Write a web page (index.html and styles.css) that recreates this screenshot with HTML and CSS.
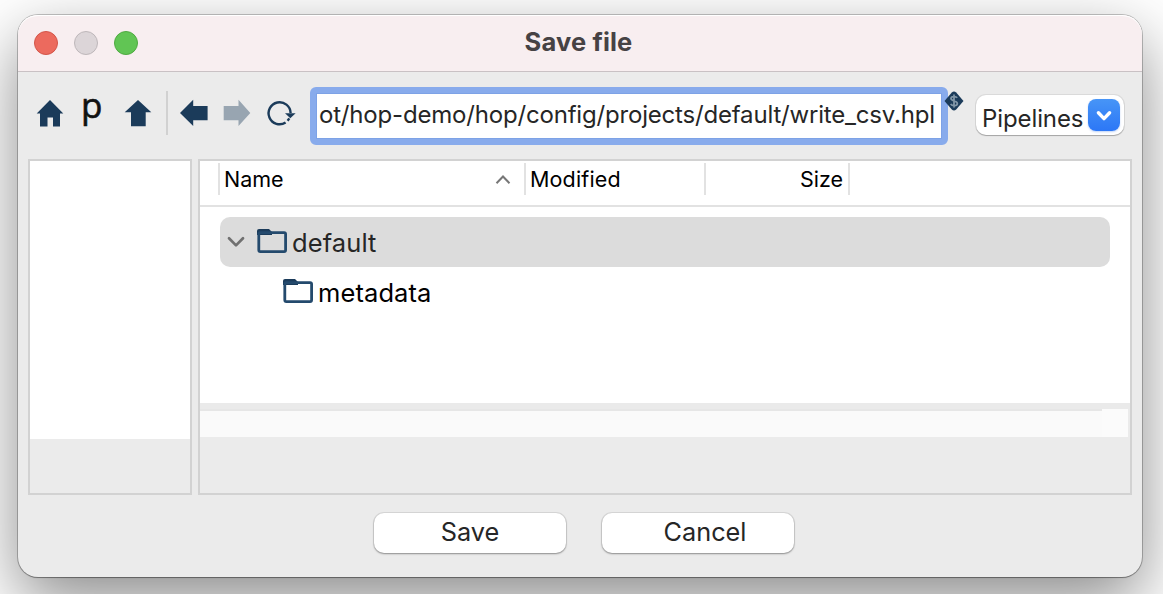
FILE: index.html
```html
<!DOCTYPE html>
<html lang="en">
<head>
<meta charset="utf-8">
<title>Save file</title>
<link rel="stylesheet" href="styles.css">
</head>
<body>
<main class="window">
  <header class="titlebar">
    <div class="lights"><span class="light close"></span><span class="light minimize"></span><span class="light zoom"></span></div>
    <h1 class="title"><span>Save file</span></h1>
  </header>
  <section class="toolbar">
    <svg class="icon home" viewBox="0 0 28 28"><path d="M14 1 27.3 14.6H24V27.5H17V18.5H11.5V27.5H4V14.6H.7Z"/></svg>
    <span class="project">p</span>
    <svg class="icon up" viewBox="0 0 28 28"><path d="M14 1 27.3 13.2H21.7V27.3H7V13.2H.7Z"/></svg>
    <span class="separator"></span>
    <svg class="icon back" viewBox="0 0 28 28"><path d="M0 14 13.2.8V7H27.6V21.2H13.2V27Z"/></svg>
    <svg class="icon forward" viewBox="0 0 28 28"><path d="M27.3 14 15.5.8V7H.7V21.2H15.5V27Z"/></svg>
    <svg class="icon refresh" viewBox="0 0 28 28"><path class="arc" d="M18.6 23.5A11 11 0 1 1 23.6 14M22.3 19.4 20.6 21.7"/><path d="M18 14.2H28.6L23.3 19.2Z"/></svg>
    <div class="path-field">
      <div class="path-input"><span class="path-text">ot/hop-demo/hop/config/projects/default/write_csv.hpl</span></div>
      <svg class="variable" viewBox="0 0 20 20"><path class="diamond" d="M.5 10 7.8 1.5Q10-.3 12.2 1.5L19.5 10 12.2 18.5Q10 20.3 7.8 18.5Z"/><path class="dollar" d="M13.2 6.8C12 5 7 5 7 7.6S13.3 9.5 13.3 12.4 8.2 15.2 6.7 13M10 3.5V16.5"/></svg>
    </div>
    <div class="select">
      <span class="select-text">Pipelines</span>
      <span class="select-button"><svg viewBox="0 0 32 32"><path d="M10.4 13.8 16 19.6 21.6 13.8"/></svg></span>
    </div>
  </section>
  <section class="panes">
    <aside class="pane bookmarks"><div class="list"></div></aside>
    <div class="pane browser">
      <div class="columns">
        <div class="column name"><span class="label">Name</span><svg class="sort" viewBox="0 0 16 10"><path d="M1.5 9.2 8 2.5 14.5 9.2"/></svg></div>
        <div class="column modified"><span class="label">Modified</span></div>
        <div class="column size"><span class="label">Size</span></div>
      </div>
      <div class="tree">
        <div class="row selected">
          <svg class="chevron" viewBox="0 0 18 12"><path d="M2 2.3 9 9.4 16 2.3"/></svg>
          <svg class="folder" viewBox="0 0 30 26"><path class="tab" d="M0 7V3Q0 1 2 1H12L15 4V7Z"/><rect x="1.8" y="4.6" width="26.8" height="19" rx="1.5"/></svg>
          <span class="label default">default</span>
        </div>
        <div class="row child">
          <svg class="folder" viewBox="0 0 30 26"><path class="tab" d="M0 7V3Q0 1 2 1H12L15 4V7Z"/><rect x="1.8" y="4.6" width="26.8" height="19" rx="1.5"/></svg>
          <span class="label metadata">metadata</span>
        </div>
      </div>
      <div class="splitter"></div>
      <div class="scroll-strip"><span class="strip-line"></span><span class="corner"></span></div>
    </div>
  </section>
  <footer class="actions">
    <button class="button save"><span>Save</span></button>
    <button class="button cancel"><span>Cancel</span></button>
  </footer>
</main>
</body>
</html>
```
FILE: styles.css
```css
* { box-sizing: border-box; }
body {
  margin: 0;
  height: 594px;
  padding: 15px 21px 17px 18px;
  overflow: hidden;
  background: #fff;
  font-family: Inter, "Liberation Sans", sans-serif;
  color: #262626;
}
svg { display: block; flex: none; overflow: visible; }
span { white-space: nowrap; }
.window {
  width: 1124px;
  height: 562px;
  border-radius: 20px;
  background: #ebebeb;
  box-shadow: 0 0 0 1px rgba(0,0,0,.22), 0 1px 1px rgba(0,0,0,.25), 0 24px 66px rgba(0,0,0,.46);
}
.titlebar {
  display: grid;
  grid-template-columns: 1fr auto 1fr;
  align-items: center;
  height: 57px;
  border-bottom: 1px solid #c9c1c4;
  border-radius: 20px 20px 0 0;
  background: #f8eef0;
  box-shadow: inset 0 1px #fff;
}
.lights { display: flex; gap: 16px; padding-left: 16px; }
.light { width: 24px; height: 24px; border-radius: 50%; border: 1px solid; }
.close { background: #ec6a5e; border-color: #d35549; }
.minimize { background: #dcd5d8; border-color: #beb7ba; }
.zoom { background: #61c554; border-color: #4faa41; }
.title { margin: 0 3px 2px 0; font-size: 25.5px; font-weight: 700; line-height: 32px; color: #464244; letter-spacing: .15px; }
.toolbar { display: flex; align-items: flex-start; height: 87px; padding-left: 18px; }
.icon { width: 28px; height: 28px; margin-top: 27px; fill: #1b3b5a; }
.project { width: 21px; margin: 11px 0 0 17px; color: #111; font: 35px/44px "Open Sans", sans-serif; -webkit-text-stroke: .6px #111; }
.up { margin-left: 22px; }
.separator { width: 2px; height: 44px; margin: 19px 0 0 14px; background: #d1d1d1; }
.back { margin-left: 12px; }
.forward { margin-left: 15px; opacity: .4; }
.refresh { margin-left: 16px; }
.arc { fill: none; stroke: #1b3b5a; stroke-width: 2.4; }
.path-field { position: relative; width: 638px; height: 58px; margin: 15px 0 0 15px; }
.path-input {
  display: flex;
  align-items: center;
  height: 58px;
  border: 6px solid #88abec;
  border-radius: 6px;
  padding: 0 3px 2px;
  background: #fff;
  box-shadow: inset 0 0 0 1px #7da2e6;
}
.path-text { font-size: 24px; line-height: 32px; letter-spacing: -.185px; }
.variable { position: absolute; left: 634px; top: 4px; width: 20px; height: 20px; }
.diamond { fill: #1b3b5a; }
.dollar { fill: none; stroke: #8095a6; stroke-width: 1.8; }
.select {
  display: flex;
  align-items: center;
  justify-content: space-between;
  width: 148px;
  height: 40px;
  margin: 23px 0 0 28px;
  padding: 0 4px 0 6px;
  border-radius: 10px;
  background: #fff;
  box-shadow: 0 0 0 1px rgba(0,0,0,.07), 0 1px 1px rgba(0,0,0,.25);
}
.select-text { padding-top: 7px; font-size: 24px; line-height: 32px; letter-spacing: -.1px; }
.select-button { width: 32px; height: 32px; border-radius: 8px; background: linear-gradient(#4795f7, #2c77f6); box-shadow: 0 1px 2px rgba(0,80,220,.25); }
.select-button path { fill: none; stroke: #fff; stroke-width: 3.4; stroke-linecap: round; stroke-linejoin: round; }
.panes { display: flex; gap: 6px; height: 336px; padding: 0 10px; }
.pane { border: 2px solid #d2d2d2; }
.bookmarks { width: 164px; }
.list { height: 278px; background: #fff; }
.browser { width: 934px; color: #000; }
.columns { display: flex; height: 46px; padding: 2px 0 0 18px; border-bottom: 2px solid #e2e2e2; background: #fff; }
.column { display: flex; align-items: center; height: 32px; border-left: 2px solid #e2e2e2; font-size: 21.5px; line-height: 30px; padding: 0 4px; }
.name { width: 306px; justify-content: space-between; }
.sort { width: 16px; height: 10px; margin-right: 9px; }
.sort path { fill: none; stroke: #777; stroke-width: 2; }
.modified { width: 180px; }
.modified .label { letter-spacing: .15px; }
.size { width: 146px; padding-right: 5px; justify-content: flex-end; border-right: 2px solid #e2e2e2; }
.tree { height: 196px; padding: 10px 20px 0; background: #fff; }
.row { display: flex; align-items: center; height: 50px; font-size: 25.5px; line-height: 32px; }
.selected { padding-left: 7px; border-radius: 10px; background: #dcdcdc; color: #262626; }
.chevron { width: 18px; height: 12px; }
.chevron path { fill: none; stroke: #707070; stroke-width: 2.7; stroke-linecap: round; stroke-linejoin: round; }
.folder { width: 30px; height: 26px; margin: 0 0 2px 12px; }
.folder rect { fill: none; stroke: #244a6d; stroke-width: 2.8; }
.tab { fill: #1b3b5a; }
.row .label { margin: 2px 0 0 5px; letter-spacing: .1px; }
.child { padding-left: 51px; }
.splitter { height: 6px; background: #eaeaea; }
.scroll-strip { display: flex; height: 28px; margin-right: 2px; background: #fafafa; }
.strip-line { width: 902px; height: 2px; background: #e6e6e6; }
.corner { width: 26px; height: 28px; background: #fbfbfb; }
.actions { display: flex; gap: 36px; padding: 18px 0 0 356px; }
.button {
  width: 192px;
  height: 40px;
  padding: 0 0 2px;
  border: 0;
  border-radius: 10px;
  background: #fff;
  box-shadow: 0 0 0 1px rgba(0,0,0,.08), 0 1px 2px rgba(0,0,0,.35);
  color: #262626;
  font: 25.3px/32px Inter, sans-serif;
}
.cancel { padding-left: 14px; }
```
